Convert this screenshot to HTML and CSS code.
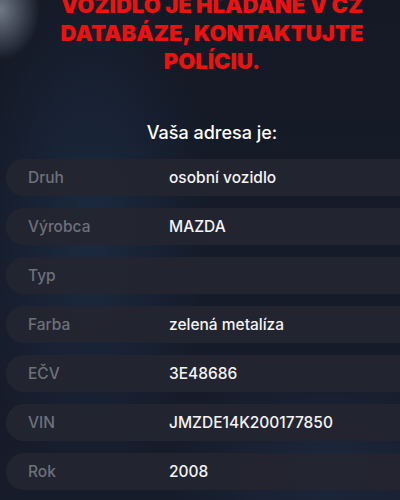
FILE: index.html
```html
<!DOCTYPE html>
<html lang="sk">
<head>
<meta charset="UTF-8" />
<meta name="viewport" content="width=device-width, initial-scale=1" />
<title>Výsledok</title>
<link rel="stylesheet" href="styles.css">
</head>
<body>

<div class="page">
  <h1 class="alert">VOZIDLO JE HĽADANÉ V CZ DATABÁZE, KONTAKTUJTE POLÍCIU.</h1>

  <h2 class="subtitle">Vaša adresa je:</h2>

  <ul class="info">
    <li><span class="label">Druh</span><span class="value">osobní vozidlo</span></li>
    <li><span class="label">Výrobca</span><span class="value">MAZDA</span></li>
    <li><span class="label">Typ</span><span class="value"></span></li>
    <li><span class="label">Farba</span><span class="value">zelená metalíza</span></li>
    <li><span class="label">EČV</span><span class="value">3E48686</span></li>
    <li><span class="label">VIN</span><span class="value">JMZDE14K200177850</span></li>
    <li><span class="label">Rok</span><span class="value">2008</span></li>
  </ul>
</div>

</body>
</html>
```

FILE: styles.css
```css
/* tmavá stránka s výsledkom */
html, body {
  margin: 0;
  height: 100%;
  overflow: hidden;
}
body {
  font-family: Inter, 'Noto Sans', sans-serif;
  color: #fff;
  background:
    radial-gradient(ellipse 40px 50px at 0 10px, rgba(190,200,215,0.55), transparent),
    radial-gradient(ellipse 120px 260px at 90px 230px, rgba(40,70,110,0.35), transparent),
    radial-gradient(ellipse 160px 120px at 330px 470px, rgba(40,60,95,0.35), transparent),
    linear-gradient(180deg, #141925 0%, #151b28 50%, #161c2a 100%);
}
.page {
  width: 412px;
  margin-left: 6px;
}
.alert {
  margin: -9px 0 0;
  padding: 0 36px;
  text-align: center;
  color: #ee1111;
  font-size: 22px;
  line-height: 28px;
  font-weight: 900;
}
.subtitle {
  margin: 47px 0 15px;
  text-align: center;
  font-size: 18px;
  line-height: 22px;
  font-weight: 500;
}
.info {
  list-style: none;
  padding: 0;
  margin: 0;
  display: flex;
  flex-direction: column;
  gap: 12px;
}
.info li {
  display: flex;
  align-items: center;
  height: 37px;
  border-radius: 18px;
  background: rgba(36, 37, 48, 0.92);
  font-size: 15.5px;
}
.label {
  width: 141px;
  padding-left: 22px;
  color: #6f717b;
  font-weight: 500;
}
.value {
  color: #f4f4f6;
  font-weight: 500;
}
```
